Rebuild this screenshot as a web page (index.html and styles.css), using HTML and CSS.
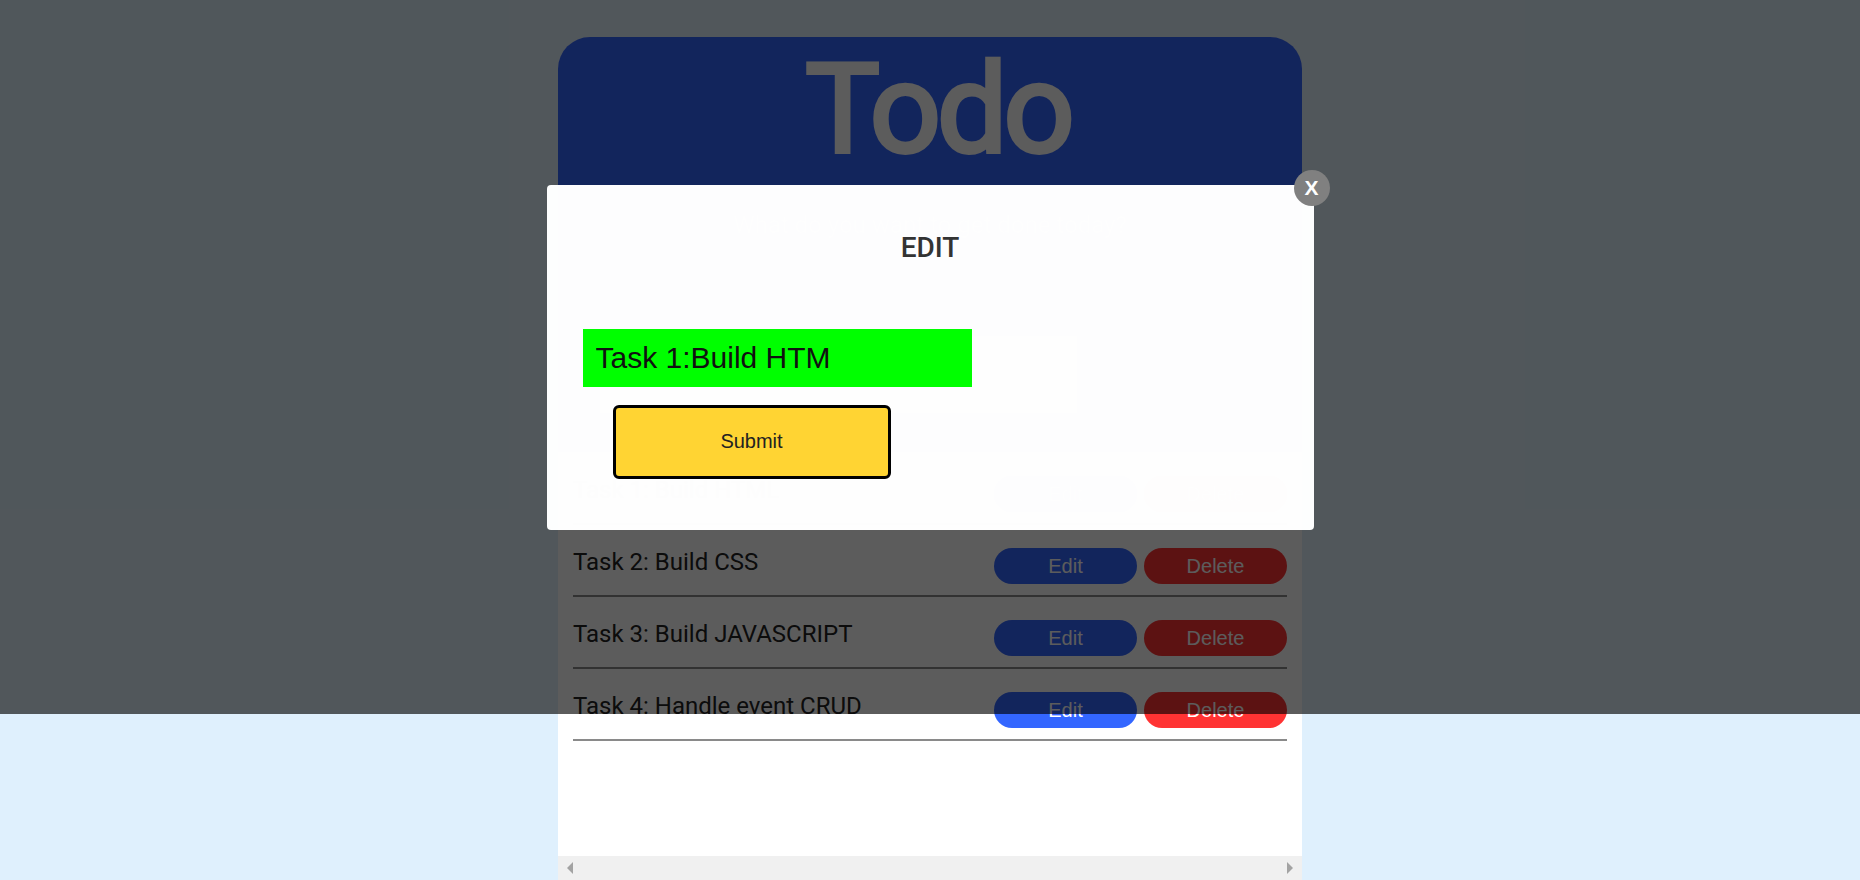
FILE: index.html
```html
<!DOCTYPE html>
<html lang="en">
<head>
<meta charset="utf-8">
<title>Todo</title>
<link rel="stylesheet" href="styles.css">
</head>
<body>
<div class="app">
  <header class="hero">
    <h1 class="title">Todo</h1>
    <p class="subtitle">What do you want to get done today?</p>
    <form class="add-form">
      <input class="add-input" type="text">
    </form>
  </header>
  <ul class="list">
    <li class="item"><span class="item-text">Task 1: Build HTML</span><div class="actions"><button class="btn btn-edit">Edit</button><button class="btn btn-delete">Delete</button></div></li>
    <li class="item"><span class="item-text">Task 2: Build CSS</span><div class="actions"><button class="btn btn-edit">Edit</button><button class="btn btn-delete">Delete</button></div></li>
    <li class="item"><span class="item-text">Task 3: Build JAVASCRIPT</span><div class="actions"><button class="btn btn-edit">Edit</button><button class="btn btn-delete">Delete</button></div></li>
    <li class="item"><span class="item-text">Task 4: Handle event CRUD</span><div class="actions"><button class="btn btn-edit">Edit</button><button class="btn btn-delete">Delete</button></div></li>
  </ul>
  <div class="hscroll"><span class="arrow arrow-left"></span><span class="arrow arrow-right"></span></div>
</div>

<div class="overlay">
  <div class="modal">
    <button class="close">X</button>
    <h2 class="modal-title">EDIT</h2>
    <input class="edit-input" type="text" value="Task 1:Build HTM">
    <button class="submit">Submit</button>
  </div>
</div>
</body>
</html>
```
FILE: styles.css
```css
* { box-sizing: border-box; }

html, body {
  margin: 0;
  height: 880px;
  overflow: hidden;
}

body {
  background: #dff0fd;
  font-family: Roboto, "Liberation Sans", Arial, sans-serif;
  position: relative;
}

.app {
  width: 744px;
  height: 843px;
  margin: 37px auto 0;
  background: #ffffff;
  border-radius: 32px 32px 0 0;
  overflow: hidden;
  display: flex;
  flex-direction: column;
}

.hero {
  height: 415px;
  flex: none;
  background: #3366ff;
  padding-top: 10px;
  display: flex;
  flex-direction: column;
  align-items: center;
}

.title {
  margin: 0;
  font-size: 125px;
  line-height: 126px;
  font-weight: 400;
  letter-spacing: -4px;
  color: #ffffff;
  -webkit-text-stroke: 4px #ffffff;
  padding-left: 16px;
}

.subtitle {
  margin: 38px 0 0;
  font-size: 24px;
  line-height: 28px;
  color: #ffffff;
}

.add-form {
  margin-top: 97px;
  align-self: stretch;
  display: flex;
  padding-left: 42px;
}

.add-input {
  width: 477px;
  height: 77px;
  border: none;
  background: #ffffff;
}

.list {
  list-style: none;
  margin: 0;
  padding: 1px 15px 0;
  flex: 1;
}

.item {
  display: flex;
  align-items: center;
  justify-content: space-between;
  height: 72px;
  padding: 23px 0 11px;
  border-bottom: 2px solid #8a8a8a;
}

.item-text {
  font-size: 24px;
  color: #222222;
  margin-bottom: 8px;
}

.actions {
  display: flex;
  gap: 7px;
}

.btn {
  width: 143px;
  height: 36px;
  border: none;
  border-radius: 18px;
  font-family: "Liberation Sans", Arial, sans-serif;
  font-size: 20px;
  color: #ffffff;
  padding: 0;
}

.btn-edit { background: #3366ff; }
.btn-delete { background: #ff3333; }

.hscroll {
  height: 24px;
  flex: none;
  background: #f0f0f0;
  display: flex;
  align-items: center;
  justify-content: space-between;
  padding: 0 8.7px;
}

.arrow {
  width: 0;
  height: 0;
  border-top: 6px solid transparent;
  border-bottom: 6px solid transparent;
}

.arrow-left { border-right: 6px solid #a3a3a3; }
.arrow-right { border-left: 6px solid #a3a3a3; }

.overlay {
  position: absolute;
  top: 0;
  left: 0;
  width: 100%;
  height: 714px;
  background: rgba(0, 0, 0, 0.64);
  display: flex;
  align-items: center;
  justify-content: center;
}

.modal {
  position: relative;
  width: 767px;
  height: 345px;
  background: rgba(255, 255, 255, 0.992);
  border-radius: 4px;
  padding: 46.5px 36px 0;
  display: flex;
  flex-direction: column;
  align-items: flex-start;
}

.close {
  position: absolute;
  top: -15px;
  right: -16px;
  width: 36px;
  height: 36px;
  border-radius: 50%;
  border: none;
  background: #808080;
  color: #ffffff;
  font-family: "Liberation Sans", Arial, sans-serif;
  font-weight: 700;
  font-size: 21px;
  padding: 0;
  line-height: 36px;
}

.modal-title {
  align-self: stretch;
  margin: 0;
  text-align: center;
  font-size: 28px;
  line-height: 33px;
  font-weight: 500;
  color: #333333;
}

.edit-input {
  margin-top: 64.5px;
  width: 389px;
  height: 58px;
  border: none;
  background: #00ff00;
  padding: 0 0 0 13px;
  font-family: "Liberation Sans", Arial, sans-serif;
  font-size: 30px;
  color: #111111;
  outline: none;
}

.submit {
  margin: 18px 0 0 30px;
  width: 278px;
  height: 74px;
  background: #ffd433;
  border: 3px solid #000000;
  border-radius: 6px;
  font-family: "Liberation Sans", Arial, sans-serif;
  font-size: 20px;
  color: #222222;
}
```
